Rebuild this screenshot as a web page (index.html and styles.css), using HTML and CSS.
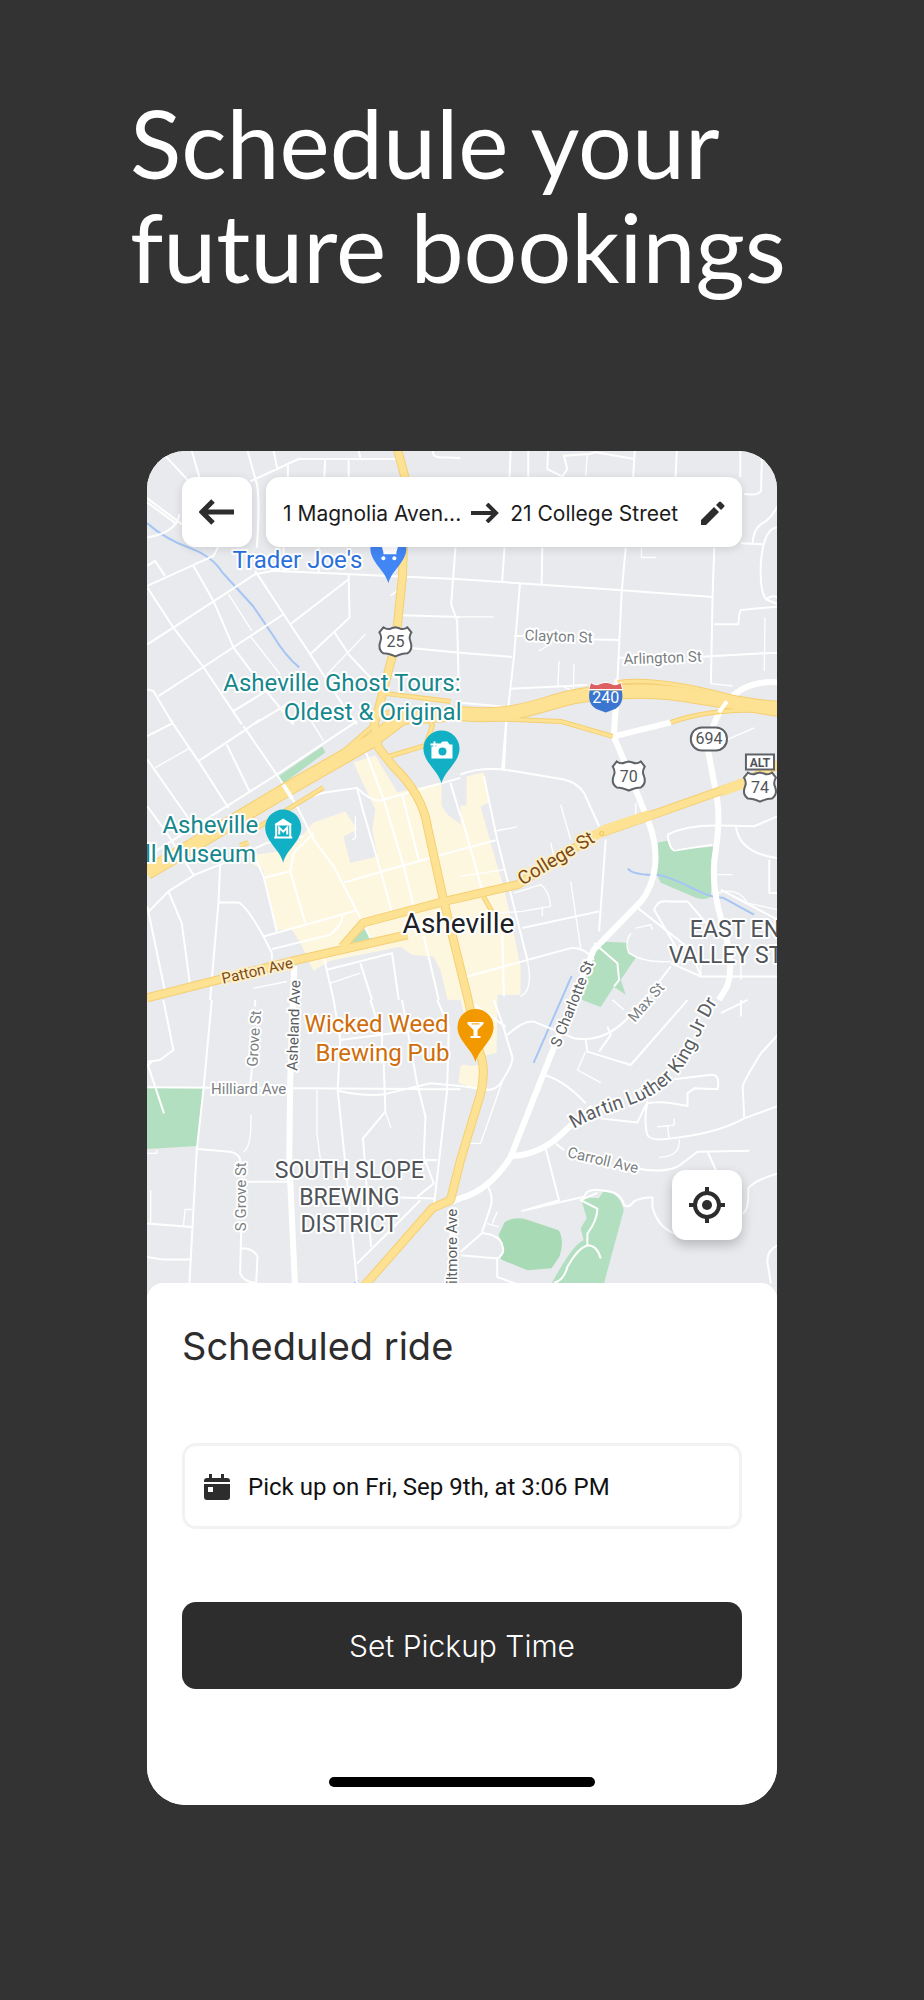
FILE: index.html
```html
<!DOCTYPE html>
<html lang="en">
<head>
<meta charset="utf-8">
<meta name="viewport" content="width=device-width, initial-scale=1">
<title>Schedule your future bookings</title>
<link rel="stylesheet" href="styles.css">
</head>
<body>
<main class="page">
<h1 class="headline">Schedule your<br>future bookings</h1>
<section class="phone">
<div class="map">
<svg class="map-art" viewBox="147 452 629 843" preserveAspectRatio="xMidYMin slice" role="img" aria-label="Map of Asheville">
<defs>
<path id="pin" d="M0 34C-3 21-18 13-18-1A18 18 0 0 1 18-1C18 13 3 21 0 34Z"/>
<path id="shield" d="M-12-14Q-8-11-4-13L0-14L4-13Q8-11 12-14L16-9Q13-4 15 0Q18 8 12 12Q7 12 0 15Q-7 12-12 12Q-18 8-15 0Q-13-4-16-9Z"/>
<path id="mlk" d="M573 1129C608 1107 643 1108 671 1080C694 1058 698 1030 718 1000"/>
</defs>
<rect class="land" x="147" y="452" width="629" height="843"/>
<path class="built" d="M353 763L375 756L397 793L441 783V806L466 806V777L483 773L488 803L480 807L497 867L503 887L510 917L520 967V995H497L496 1053L482 1056L485 1067L480 1090L458 1083L460 1066L475 1060L460 1000H447L440 970L433 957L412 955L400 947L330 961L313 971L300 943L292 930L277 930L263 870L250 863L255 855L290 850L313 823L345 812L357 830L343 837L350 863L377 857L372 830L375 810Z"/>
<path class="land" d="M441 806L460 803V825L447 815ZM440 995L458 1010V1040L474 1060L495 1058V1063L470 1066L445 1060Z"/>
<g class="park">
<path d="M278 777L322 747L325 753L283 784ZM350 943L365 928L372 940ZM657 843L668 841L670 850L712 847L710 897Q704 901 695 898L660 883L655 873Z"/>
<path d="M603 942L627 943V953L635 958L620 980L625 995L613 987L600 1007L581 1000L587 960ZM147 1087H203L197 1146L147 1149Z"/>
<path class="park-deep" d="M504 1222Q515 1215 528 1220L558 1230Q564 1240 559 1256L551 1268L527 1270L500 1259Q504 1245 498 1235Z"/>
<path d="M580 1197L598 1198L602 1192Q618 1190 623 1210L600 1295H545Q570 1245 583 1240L580 1228L586 1218Z"/>
</g>
<g class="water">
<path d="M147 524Q165 540 190 549Q212 557 222 573L253 607L272 635Q286 658 299 668"/>
<path d="M627 869Q633 876 656 875C680 878 700 898 722 898L753 915M571 976L533 1063M350 1287L358 1280"/>
</g>
<g class="minor">
<g transform="translate(140 445) scale(.33333)">
<path d="M75 35L145 110M155 20L178 100M322 20L350 120Q360 170 350 310M400 20L412 78M330 112L475 45H775M443 65V100M555 45L552 100M625 45V100M655 20L660 42M878 20Q875 38 895 40L960 42M22 163L125 240M22 175L110 240M22 280Q110 265 118 210M22 425L220 335Q235 310 235 300M22 365L45 350L75 395M22 600L100 550L345 390L400 380L960 405M55 755L190 668L430 510M22 430L100 550L190 668L305 840M160 365L220 470L280 610L370 730L460 840M345 380L450 540L510 630L600 770L650 840M280 800L410 720M450 540L625 405L628 520L510 630M580 560L625 630L700 710M625 390V405M785 513L960 518M800 610L960 625M945 310L932 480L950 530L955 740M430 310V385M535 310V385M22 735L40 740L100 840M340 840L440 780"/>
<path class="faint" d="M265 450L335 560M675 570L560 690M330 575L420 690M750 455L770 440"/>
</g>
<g transform="translate(460 445) scale(.33333)">
<path d="M0 405L485 438L755 458M150 20L147 100M203 20V100M262 20L260 75L305 97L320 75L310 35L385 30L405 25L520 45M522 20L517 100M648 20L644 100M838 20V100M903 40L900 140Q895 155 850 150M950 185Q930 225 900 240Q875 260 875 300M840 297L905 300M950 250Q910 250 900 350Q895 440 915 465L950 480M915 465Q935 450 950 460M132 310L125 410M245 310L243 420M178 420L160 640L137 840M495 310L483 440L470 710M760 310L755 458L750 718M760 540H832Q835 500 840 497L950 487M0 625L155 638M160 575H190M390 585L473 587M475 640H490M720 637L950 625M150 733L380 722M0 775L140 788M137 840L130 980"/>
<path class="faint" d="M380 30L375 95M542 310V340H585M0 518H100M912 520L910 680M295 650L292 725M340 660L338 740L305 725M750 718L815 725M235 620L260 605"/>
</g>
<g transform="translate(140 720) scale(.33333)">
<path d="M22 50L100 10M90 0L175 125L265 265M22 120L120 260L190 360M22 260L80 340L160 465M175 125L310 35L360 0M260 75L330 220M22 410L165 320L410 165L650 5M310 20L430 195L470 260L520 360L580 440L650 575L690 655M465 258Q520 220 580 215L650 205Q690 245 720 243L800 220L960 175M650 205L670 280L720 450L755 580M670 80L730 240L790 440L820 560M785 225L835 420M22 580L85 515L165 465L240 435L380 370L490 350M240 435L235 550L215 780L210 840M235 548H295Q320 560 370 650L395 700V735M85 515L125 610L150 795M22 560L75 815M330 380L370 470L410 635M370 475L450 455L495 610M370 650L650 572M395 688L570 645Q610 610 605 588M520 340L460 400L450 455M612 488L780 440L960 390M550 710L580 840M560 750L755 700L775 840M660 730L695 840M850 650L895 840M930 190L960 290"/>
<path class="faint" d="M45 145L150 85M510 0L550 65M645 290V345Q650 355 635 360M570 790L660 760M340 805L440 785"/>
</g>
<g transform="translate(460 720) scale(.33333)">
<path d="M137 0L125 150M0 165Q60 140 150 153L310 180Q350 190 370 220L415 320M0 280L70 530L125 640L130 830M70 170L110 360L150 520L200 720M0 390L105 362M435 360L415 635M185 625L415 575M20 770L330 685Q370 680 400 720M400 670L470 730L475 780L460 800M620 345Q680 315 780 318L880 320L950 290M620 345Q625 385 640 393L755 375M825 320Q835 400 950 415M925 420V520H950M525 560L690 690M650 690L580 570Q590 540 620 545L680 545L770 650M690 690L720 770M630 730L720 770L950 770M950 600L780 510M630 740L530 870"/>
<path class="faint" d="M0 470L130 450M100 335L170 322M300 255L330 360M270 370L285 430M160 520L240 495Q265 510 270 560L185 575M245 560V590M330 485L360 685M510 640Q490 670 505 700Q550 730 630 725M525 625L570 615L575 630M765 465H815M800 60L880 25M525 250V285M185 575L110 580M770 520Q830 500 860 550L950 570M720 770V690M840 690V780M200 720Q220 810 180 830"/>
</g>
<g transform="translate(140 1000) scale(.33333)">
<path d="M70 0L100 150L60 180L22 185M215 0L190 270L170 450L148 850M22 262L960 268M35 185L22 200M22 190L72 340M345 0V20M335 205L330 260M172 447L270 455Q300 460 303 490M303 690L300 820Q310 845 348 848L352 770Q340 742 303 745M320 545H445M22 670L155 680M22 770L70 778H150M580 0L600 120L592 270L615 490L650 850M600 120L820 92M690 0L725 110V190M785 0L830 250L855 350L850 470L880 550L830 590M650 790L840 600M890 0L925 80L920 270L880 620M830 480H890M780 592L880 595M592 272Q680 290 730 283L870 250L960 258M730 190L735 335L668 415L692 740"/>
<path class="faint" d="M530 270V400L542 490M332 345Q335 440 310 455M735 335L752 385M155 628H135L130 678M22 460H50V450M32 570V670"/>
</g>
<g transform="translate(460 1000) scale(.33333)">
<path d="M100 0L125 70L155 170Q160 190 120 250Q100 275 70 268L0 258M20 0L135 80M140 105Q190 60 220 65L340 115Q430 130 500 55L545 0M375 120L380 155L510 195L680 0M415 155L450 105L440 80M250 225Q310 240 375 310M420 355L530 367L560 305Q550 350 557 395Q560 420 600 418Q760 405 850 355L950 318M560 310Q600 300 680 318L680 280L700 265L770 268Q780 220 745 225L640 238M850 355L845 260Q850 240 900 160L950 105M840 0V50M780 40L860 0M285 430L310 450M530 505Q600 520 650 500L710 455L865 452M255 445L295 600L185 632L370 590Q380 560 430 572Q480 575 490 615Q505 625 520 603Q545 590 575 592V620Q590 680 640 700M740 455L765 510M845 640Q865 630 862 565Q880 540 950 520M80 555Q100 590 90 620L65 695M0 755L65 698Q120 705 125 735Q135 760 110 775L0 765M110 775V830L165 850M950 735Q915 750 920 790L930 850M410 578L360 600L410 625Q410 660 380 700V735Q410 735 420 775M380 735Q350 745 320 800Q310 840 280 848"/>
<path class="faint" d="M375 155L350 210L420 248M590 380L640 375V355M620 378L625 415M655 418Q660 470 595 472M125 245L60 430H20M80 670L115 680M110 635L95 670M455 0L490 30"/>
</g>
</g>
<g class="major">
<path d="M617 680L613 737L627 770L648 823C660 855 655 883 640 902L593 950L553 1048L510 1157Q489 1190 460 1198L450 1202"/>
<path d="M508 1156Q540 1156 565 1130L592 1107M718 1000L726 987Q732 970 727 945L717 907Q710 875 715 850Q720 815 715 793L707 750Q708 730 722 707Q742 680 777 683M613 737L670 723"/>
<path d="M294 966L290 1080L289 1160L295 1290"/>
<path d="M452 1210V1290" />
</g>
<g class="edge">
<path class="wide" d="M147 873L283 792L370 742L402 718L460 714C530 722 550 694 605 694Q650 688 700 698L777 710"/>
<path class="mid" d="M397 450L405 480L402 578L395 645L374 725L378 748L393 767Q422 795 427 827L443 900L467 997L479 1052Q486 1070 480 1094L460 1160L450 1200L432 1208L360 1290M147 998L297 960L407 935M342 947L363 923L447 901L517 885L593 836L647 817L743 783L777 765"/>
<path class="slim" d="M617 683Q660 677 743 701L777 704M460 718L560 722L612 737M670 723Q710 708 777 711M483 897L500 927M385 758L425 746L432 726Q420 704 385 714M385 694L450 702M330 764L374 725M256 829L323 788M240 846L248 843"/>
</g>
<g class="highway">
<path class="wide" d="M147 873L283 792L370 742L402 718L460 714C530 722 550 694 605 694Q650 688 700 698L777 710"/>
<path class="mid" d="M397 450L405 480L402 578L395 645L374 725L378 748L393 767Q422 795 427 827L443 900L467 997L479 1052Q486 1070 480 1094L460 1160L450 1200L432 1208L360 1290M147 998L297 960L407 935M342 947L363 923L447 901L517 885L593 836L647 817L743 783L777 765"/>
<path class="slim" d="M617 683Q660 677 743 701L777 704M460 718L560 722L612 737M670 723Q710 708 777 711M483 897L500 927M385 758L425 746L432 726Q420 704 385 714M385 694L450 702M330 764L374 725M256 829L323 788M240 846L248 843"/>
<path class="ramp" d="M590 838L605 830L650 815M720 792L745 783"/>
<circle class="knot" cx="601" cy="834" r="2"/>
</g>
<path class="overpass" d="M718 713L726 702M283 785L292 799"/>
<g class="road-label">
<text transform="translate(524 641) rotate(2)">Clayton St</text>
<text transform="translate(623 665) rotate(-2)">Arlington St</text>
<text x="211" y="1094">Hilliard Ave</text>
<text transform="translate(257 1067) rotate(-86)">Grove St</text>
<text transform="translate(246 1231) rotate(-90)">S Grove St</text>
<text transform="translate(634 1023) rotate(-49)">Max St</text>
<text transform="translate(566 1157) rotate(13)">Carroll Ave</text>
<g class="road-dark">
<text transform="translate(297 1071) rotate(-88)">Asheland Ave</text>
<text transform="translate(457 1293) rotate(-90)">Biltmore Ave</text>
<text transform="translate(559 1048) rotate(-68)">S Charlotte St</text>
<text class="road-large"><textPath href="#mlk">Martin Luther King Jr Dr</textPath></text>
</g>
<g class="road-brown">
<text transform="translate(223 984) rotate(-13)">Patton Ave</text>
<text class="road-large" transform="translate(522 886) rotate(-31)">College St</text>
</g>
</g>
<g class="place">
<text class="blue" x="362" y="569" text-anchor="end">Trader Joe's</text>
<g class="teal" text-anchor="end">
<text x="460" y="692">Asheville Ghost Tours:</text>
<text x="461" y="721">Oldest &amp; Original</text>
<text x="258" y="833">Asheville</text>
<text x="256" y="862">ll Museum</text>
</g>
<g class="orange" text-anchor="end">
<text x="448" y="1032">Wicked Weed</text>
<text x="449" y="1061">Brewing Pub</text>
</g>
<g class="district">
<text x="689" y="937">EAST EN</text>
<text x="668" y="963">VALLEY ST</text>
<g text-anchor="middle">
<text x="349" y="1178">SOUTH SLOPE</text>
<text x="349" y="1205">BREWING</text>
<text x="349" y="1232">DISTRICT</text>
</g>
</g>
<text class="city" x="458" y="933" text-anchor="middle">Asheville</text>
</g>
<g class="badges">
<g transform="translate(395 642)"><use href="#shield"/><text y="6">25</text></g>
<g transform="translate(628 776)"><use href="#shield"/><text y="6">70</text></g>
<g transform="translate(759 787)"><use href="#shield"/><text y="6">74</text></g>
<rect x="690" y="728" width="36" height="23" rx="11"/><text x="708" y="745">694</text>
<rect x="745" y="755" width="28" height="15"/><text class="alt" x="759" y="767">ALT</text>
<g transform="translate(605 696)">
<path class="interstate" d="M-16-5Q-19 9-8 14L0 17L8 14Q19 9 16-5Z"/>
<path class="interstate-top" d="M-15-13Q-10-9-5-12L0-13L5-12Q10-9 15-13L17-6H-17Z"/>
<text class="light" y="8">240</text>
</g>
</g>
<g transform="translate(388 550)"><use href="#pin" class="pin-blue"/><path class="glyph" d="M-12-8H-8L-5 3H8L11-7H-6ZM-5 5H8V3H-5Z"/><circle class="glyph" cx="-5" cy="9" r="2"/><circle class="glyph" cx="6" cy="9" r="2"/></g>
<g transform="translate(441 750)"><use href="#pin" class="pin-teal"/><path class="glyph" d="M-10-3H-5V-6H-1L1-8H6L8-5H11V9H-10Z"/><path class="glyph-line" d="M-11-5H-4M-7-8V-2"/><circle class="pin-teal" cx="1" cy="2" r="4"/></g>
<g transform="translate(283 829)"><use href="#pin" class="pin-teal"/><path class="glyph-line" d="M-8-4H8M-7-4V8M7-4V8M-9 9H9"/><path class="glyph-thin" d="M-4 6V-1L0 3L4-1V6"/><path class="glyph" d="M-9-4L0-10L9-4Z"/></g>
<g transform="translate(475 1028)"><use href="#pin" class="pin-orange"/><path class="glyph" d="M-8-6H8V-4L2 2V8H5V10H-5V8H-2V2L-8-4Z"/><path class="glass" d="M-4-4H4"/></g>
</svg>
<div class="toolbar">
<button class="tile" type="button" aria-label="Back"><svg class="icon-back" viewBox="0 0 36 28" aria-hidden="true"><path d="M35 14H3M14 3L3 14L14 25"/></svg></button>
<button class="route" type="button" aria-label="Edit route from 1 Magnolia Avenue to 21 College Street">
<span class="from">1 Magnolia Aven...</span>
<svg class="icon-to" viewBox="0 0 28 20" aria-hidden="true"><path d="M0 10H25M16 1L25 10L16 19"/></svg>
<span class="to">21 College Street</span>
<svg class="icon-edit" viewBox="0 0 24 24" aria-hidden="true"><path d="M0 19V24H5L18 11L13 6ZM15 4L20 9L23 6Q24 5 23 4L20 1Q19 0 18 1Z"/></svg>
</button>
</div>
<button class="tile locate" type="button" aria-label="Show my location"><svg class="icon-locate" viewBox="0 0 36 36" aria-hidden="true"><circle class="ring" cx="18" cy="18" r="12"/><path class="ring" d="M18 0V6M18 30V36M0 18H6M30 18H36"/><circle cx="18" cy="18" r="5"/></svg></button>
</div>
<div class="sheet">
<h2 class="sheet-title">Scheduled ride</h2>
<button class="pickup" type="button">
<svg class="icon-calendar" viewBox="0 0 26 26" aria-hidden="true"><path d="M5 0H8V4H17V0H20V4H23Q26 4 26 7V8H0V7Q0 4 3 4H5ZM0 10H26V23Q26 26 23 26H3Q0 26 0 23ZM4 13V18H9V13Z" fill-rule="evenodd"/></svg>
<span>Pick up on Fri, Sep 9th, at 3:06 PM</span>
</button>
<button class="confirm" type="button">Set Pickup Time</button>
<div class="home-bar"></div>
</div>
</section>
</main>
</body>
</html>
```
FILE: styles.css
```css
* { box-sizing: border-box; }

body {
  margin: 0;
  background: #333;
  font-family: Inter, "Liberation Sans", sans-serif;
  color: #2d2d2d;
}

button {
  margin: 0;
  border: 0;
  font: inherit;
  color: inherit;
  cursor: pointer;
}

.page { padding: 90px 0 194px; }

.headline {
  margin: 0 100px 153px 130px;
  color: #fff;
  font: 400 95px/104px Lato, sans-serif;
  white-space: nowrap;
}

.phone {
  margin: 0 147px;
  overflow: hidden;
  border-radius: 38px;
  background: #fff;
}

.map { position: relative; }
.map-art { display: block; width: 100%; font-family: Roboto, sans-serif; }

.land { fill: #e8eaed; }
.built { fill: #fef7e0; }
.park { fill: #b2dfc0; }
.park-deep { fill: #a8dab5; }
.water { fill: none; stroke: #a6c5f5; stroke-width: 2; }
.minor { fill: none; stroke: #fff; stroke-width: 6; stroke-linejoin: round; }
.faint { stroke-width: 4; }
.major { fill: none; stroke: #fff; stroke-width: 6; stroke-linejoin: round; }
.edge, .highway { fill: none; stroke-linejoin: round; }
.edge { stroke: #f5cf73; }
.edge .wide { stroke-width: 15; }
.edge .mid { stroke-width: 9; }
.edge .slim { stroke-width: 5; }
.highway { stroke: #fde293; }
.highway .wide { stroke-width: 13; }
.highway .mid { stroke-width: 7; }
.highway .slim { stroke-width: 3; }
.ramp { stroke-width: 10; }
.knot { stroke: #f0c75e; stroke-width: 1; }
.overpass { fill: none; stroke: #fff; stroke-width: 4; }

.map-art text { paint-order: stroke; stroke: #fff; stroke-width: 4px; stroke-linejoin: round; }
.road-label { fill: #7b7f84; font-size: 15px; }
.road-dark { fill: #5a5e63; }
.road-brown { fill: #7d4a14; }
.road-large { font-size: 19px; }
.map-art .road-brown text { stroke: #fdf0c8; }
.place { font-size: 24px; }
.blue { fill: #2a70dc; }
.teal { fill: #16878d; }
.orange { fill: #cf6d0a; }
.district { fill: #505459; font-size: 23px; }
.city { fill: #202124; font-size: 28px; }
.badges { fill: #fff; stroke: #5f6368; stroke-width: 2; font-size: 16px; text-anchor: middle; }
.map-art .badges text { fill: #505459; stroke: none; }
.badges .alt { font-size: 12px; font-weight: 700; }
.map-art .badges .light { fill: #fff; }
.interstate { fill: #3a75cf; stroke: none; }
.interstate-top { fill: #dc5f62; stroke: #fff; stroke-width: 1; }
.pin-blue { fill: #4285f4; }
.pin-teal { fill: #12b0c4; }
.pin-orange { fill: #f29900; }
.glyph { fill: #fff; }
.glyph-line { fill: none; stroke: #fff; stroke-width: 2; }
.glyph-thin { fill: none; stroke: #fff; stroke-width: 2; }
.glass { stroke: #f29900; stroke-width: 1; }

.toolbar {
  position: absolute;
  top: 26px;
  left: 35px;
  right: 35px;
  display: flex;
  gap: 14px;
}

.tile, .route {
  height: 70px;
  border-radius: 14px;
  background: #fff;
  box-shadow: 0 2px 10px rgba(0, 0, 0, .12);
}

.tile {
  display: grid;
  place-items: center;
  flex: none;
  width: 70px;
  padding: 0;
}

.route {
  display: flex;
  flex: 1;
  align-items: center;
  min-width: 0;
  padding: 2px 17px 0;
  color: #1c1c1c;
  font-size: 21px;
  white-space: nowrap;
}

.icon-to { width: 28px; margin: 0 11px 0 10px; }
.icon-edit { width: 24px; margin-left: auto; fill: #2d2d2d; }
.icon-back { width: 36px; }
.icon-back, .icon-to { flex: none; fill: none; stroke: #2d2d2d; stroke-width: 5; }
.icon-to { stroke-width: 4; }
.icon-locate { width: 36px; fill: #2d2d2d; }
.ring { fill: none; stroke: #2d2d2d; stroke-width: 4; }

.locate {
  position: absolute;
  right: 35px;
  bottom: 55px;
  box-shadow: 0 5px 12px rgba(0, 0, 0, .22);
}

.sheet {
  position: relative;
  display: flex;
  flex-direction: column;
  margin-top: -12px;
  padding: 39px 35px 18px;
  border-radius: 16px 16px 0 0;
  background: #fff;
}

.sheet-title { margin: 0 0 73px; font-size: 38px; font-weight: 400; line-height: 48px; }

.pickup {
  display: flex;
  align-items: center;
  gap: 18px;
  height: 86px;
  padding: 2px 19px 0;
  border: 3px solid #f1f2f4;
  border-radius: 14px;
  background: #fff;
  color: #111;
  font: 24px Roboto, sans-serif;
}

.icon-calendar { width: 26px; fill: #2d2d2d; }

.confirm {
  height: 87px;
  margin-top: 73px;
  border-radius: 14px;
  background: #2d2d2d;
  color: #fff;
  font-size: 30px;
  font-weight: 300;
}

.home-bar {
  align-self: center;
  width: 266px;
  height: 10px;
  margin-top: 88px;
  border-radius: 5px;
  background: #000;
}
```
